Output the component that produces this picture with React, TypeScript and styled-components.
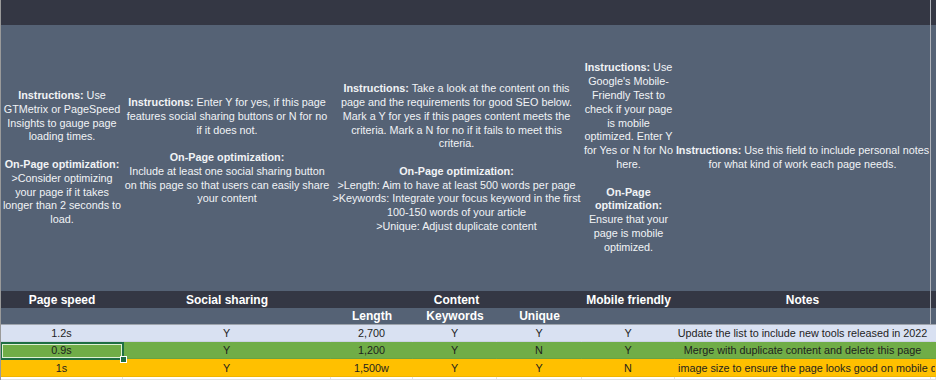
import React from 'react'
import styled, { createGlobalStyle, css } from 'styled-components'

const GlobalStyle = createGlobalStyle`
  html, body {
    margin: 0;
    padding: 0;
    background: #ffffff;
  }
  body {
    font-family: 'Liberation Sans', Arial, sans-serif;
    overflow: hidden;
  }
`

const DARK = '#343744'
const SLATE = '#556275'
const EDGE = '#aeb2b9'

const Sheet = styled.div`
  display: grid;
  grid-template-columns: 122px 208px 82px 84px 85px 93px 256px 1fr;
  grid-template-rows: 25px 266px 17px 17px 17px 17px 18px 3px;
  width: 935px;
  height: 380px;
  border-left: 1px solid #9a9a9a;
  position: relative;
  overflow: hidden;
`

const Band = styled.div<{ $dark?: boolean; $span?: string; $edge?: boolean }>`
  grid-column: ${(p) => p.$span || 'auto'};
  background: ${(p) => (p.$dark ? DARK : SLATE)};
  ${(p) =>
    p.$edge &&
    css`
      border-right: 1px solid ${EDGE};
    `}
`

const Instruction = styled.div<{ $span?: string; $edge?: boolean }>`
  grid-column: ${(p) => p.$span || 'auto'};
  background: ${SLATE};
  color: #f1f3f5;
  font-size: 10.8px;
  line-height: 13.8px;
  text-align: center;
  white-space: nowrap;
  display: flex;
  flex-direction: column;
  justify-content: center;
  align-items: center;
  overflow: visible;
  ${(p) =>
    p.$edge &&
    css`
      border-right: 1px solid ${EDGE};
    `}

  b {
    font-weight: 700;
  }
`

const Line = styled.div`
  min-height: 13.8px;
`

const HeadCell = styled.div<{ $span?: string; $sub?: boolean; $edge?: boolean }>`
  grid-column: ${(p) => p.$span || 'auto'};
  background: ${(p) => (p.$sub ? SLATE : DARK)};
  color: #ffffff;
  font-size: 12px;
  font-weight: 700;
  display: flex;
  align-items: center;
  justify-content: center;
  white-space: nowrap;
  ${(p) =>
    p.$sub &&
    css`
      border-bottom: 1px solid #9ea4ad;
    `}
  ${(p) =>
    p.$edge &&
    css`
      border-right: 1px solid ${EDGE};
    `}
`

const tones = {
  lavender: '#d9e1f2',
  green: '#70ad47',
  amber: '#ffc000',
  blank: '#ffffff',
}

type Tone = keyof typeof tones

const DataCell = styled.div<{ $tone: Tone; $span?: string; $left?: boolean }>`
  grid-column: ${(p) => p.$span || 'auto'};
  background: ${(p) => tones[p.$tone]};
  color: #1e1e1e;
  font-size: 10.8px;
  display: flex;
  align-items: center;
  justify-content: ${(p) => (p.$left ? 'flex-start' : 'center')};
  padding-left: ${(p) => (p.$left ? '3px' : '0')};
  white-space: nowrap;
  overflow: hidden;
  border-bottom: 1px solid ${(p) => (p.$tone === 'blank' ? '#e2e2e2' : 'rgba(0,0,0,0.06)')};
  border-right: 1px solid ${(p) => (p.$tone === 'blank' ? '#e2e2e2' : 'transparent')};
  box-sizing: border-box;
`

const Selection = styled.div`
  position: absolute;
  left: -1px;
  top: 342px;
  width: 124px;
  height: 18px;
  box-sizing: border-box;
  border: 2px solid #1e6e43;
  box-shadow: inset 0 0 0 1px #dff0d4;
  pointer-events: none;

  &::after {
    content: '';
    position: absolute;
    right: -5px;
    bottom: -5px;
    width: 5px;
    height: 5px;
    background: #1e6e43;
    border: 1px solid #ffffff;
  }
`

const rows: { tone: Tone; cells: string[] }[] = [
  {
    tone: 'lavender',
    cells: ['1.2s', 'Y', '2,700', 'Y', 'Y', 'Y', 'Update the list to include new tools released in 2022'],
  },
  {
    tone: 'green',
    cells: ['0.9s', 'Y', '1,200', 'Y', 'N', 'Y', 'Merge with duplicate content and delete this page'],
  },
  {
    tone: 'amber',
    cells: ['1s', 'Y', '1,500w', 'Y', 'Y', 'N', 'image size to ensure the page looks good on mobile de'],
  },
]

const App = () => {
  return (
    <>
      <GlobalStyle />
      <Sheet>
        <Band $dark $span="1 / 8" $edge />
        <Band $dark />

        <Instruction>
          <Line>
            <b>Instructions:</b> Use
          </Line>
          <Line>GTMetrix or PageSpeed</Line>
          <Line>Insights to gauge page</Line>
          <Line>loading times.</Line>
          <Line />
          <Line>
            <b>On-Page optimization:</b>
          </Line>
          <Line>&gt;Consider optimizing</Line>
          <Line>your page if it takes</Line>
          <Line>longer than 2 seconds to</Line>
          <Line>load.</Line>
        </Instruction>
        <Instruction>
          <Line>
            <b>Instructions:</b> Enter Y for yes, if this page
          </Line>
          <Line>features social sharing buttons or N for no</Line>
          <Line>if it does not.</Line>
          <Line />
          <Line>
            <b>On-Page optimization:</b>
          </Line>
          <Line>Include at least one social sharing button</Line>
          <Line>on this page so that users can easily share</Line>
          <Line>your content</Line>
          <Line />
        </Instruction>
        <Instruction $span="3 / 6">
          <Line>
            <b>Instructions:</b> Take a look at the content on this
          </Line>
          <Line>page and the requirements for good SEO below.</Line>
          <Line>Mark a Y for yes if this pages content meets the</Line>
          <Line>criteria. Mark a N for no if it fails to meet this</Line>
          <Line>criteria.</Line>
          <Line />
          <Line>
            <b>On-Page optimization:</b>
          </Line>
          <Line>&gt;Length: Aim to have at least 500 words per page</Line>
          <Line>&gt;Keywords: Integrate your focus keyword in the first</Line>
          <Line>100-150 words of your article</Line>
          <Line>&gt;Unique: Adjust duplicate content</Line>
        </Instruction>
        <Instruction>
          <Line>
            <b>Instructions:</b> Use
          </Line>
          <Line>Google's Mobile-</Line>
          <Line>Friendly Test to</Line>
          <Line>check if your page</Line>
          <Line>is mobile</Line>
          <Line>optimized. Enter Y</Line>
          <Line>for Yes or N for No</Line>
          <Line>here.</Line>
          <Line />
          <Line>
            <b>On-Page</b>
          </Line>
          <Line>
            <b>optimization:</b>
          </Line>
          <Line>Ensure that your</Line>
          <Line>page is mobile</Line>
          <Line>optimized.</Line>
        </Instruction>
        <Instruction $edge>
          <Line>
            <b>Instructions:</b> Use this field to include personal notes
          </Line>
          <Line>for what kind of work each page needs.</Line>
        </Instruction>
        <Instruction />

        <HeadCell>Page speed</HeadCell>
        <HeadCell>Social sharing</HeadCell>
        <HeadCell $span="3 / 6">Content</HeadCell>
        <HeadCell>Mobile friendly</HeadCell>
        <HeadCell $edge>Notes</HeadCell>
        <HeadCell />

        <HeadCell $sub />
        <HeadCell $sub />
        <HeadCell $sub>Length</HeadCell>
        <HeadCell $sub>Keywords</HeadCell>
        <HeadCell $sub>Unique</HeadCell>
        <HeadCell $sub />
        <HeadCell $sub $edge />
        <HeadCell $sub />

        {rows.map((row, i) => (
          <React.Fragment key={i}>
            {row.cells.slice(0, 6).map((c, j) => (
              <DataCell key={j} $tone={row.tone}>
                {c}
              </DataCell>
            ))}
            {i === 2 ? (
              <DataCell $tone={row.tone} $span="7 / 9" $left>
                {row.cells[6]}
              </DataCell>
            ) : (
              <>
                <DataCell $tone={row.tone}>{row.cells[6]}</DataCell>
                <DataCell $tone={row.tone} />
              </>
            )}
          </React.Fragment>
        ))}

        {Array.from({ length: 8 }).map((_, j) => (
          <DataCell key={j} $tone="blank" />
        ))}

        <Selection />
      </Sheet>
    </>
  )
}

export default App
